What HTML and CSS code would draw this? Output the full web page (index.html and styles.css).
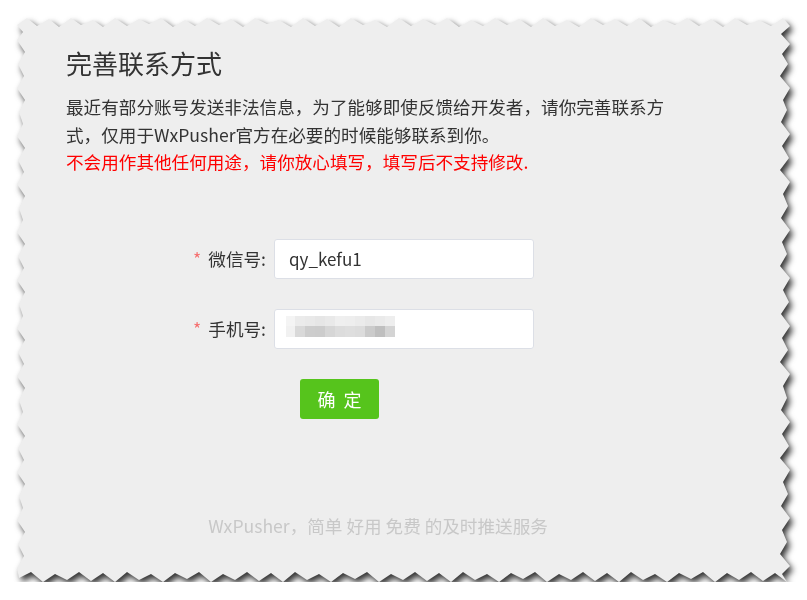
FILE: index.html
```html
<!DOCTYPE html>
<html lang="zh-CN">
<head>
<meta charset="utf-8">
<title>完善联系方式</title>
<link rel="stylesheet" href="styles.css">
</head>
<body>
<svg class="defs" width="0" height="0" aria-hidden="true">
  <clipPath id="tear" clipPathUnits="userSpaceOnUse">
    <polygon points="0,7 10,0 20,8 32,1 42,9 54,0 64,7 76,2 86,9 98,0 110,8 122,1 132,6 144,0 156,9 168,2 178,8 190,0 202,7 214,1 226,9 238,0 250,6 262,2 274,9 286,0 298,8 310,1 322,9 334,0 346,7 358,2 370,9 382,0 394,8 406,1 418,7 430,0 442,9 454,2 466,8 478,0 490,7 502,1 514,9 526,0 538,8 550,2 562,9 574,0 586,7 598,1 610,8 622,0 634,9 646,2 658,7 670,0 682,8 694,1 706,9 718,0 730,7 742,2 754,8 766,0
    773,8 764,16 773,26 765,36 771,46 763,58 773,70 766,82 770,92 764,104 773,116 765,128 772,140 763,152 773,164 766,176 771,188 764,200 773,212 765,224 770,236 763,248 773,260 766,272 772,284 764,296 773,308 765,320 771,332 763,344 773,356 766,368 770,380 764,392 773,404 765,416 772,428 763,440 773,452 766,464 771,476 764,488 773,500 765,512 770,524 763,536 773,548 765,556
    770,564 758,555 746,563 734,554 722,562 710,555 698,564 686,554 674,561 662,555 650,564 638,556 626,562 614,554 602,564 590,555 578,563 566,554 554,562 542,556 530,564 518,554 506,561 494,555 482,564 470,556 458,562 446,554 434,564 422,555 410,563 398,554 386,562 374,556 362,564 350,554 338,561 326,555 314,564 302,556 290,562 278,554 266,564 254,555 242,563 230,554 218,562 206,556 194,564 182,554 170,561 158,555 146,564 134,556 122,562 110,554 98,564 86,555 74,563 62,554 50,562 38,556 26,564 14,554 2,560
    0,550 7,538 1,526 8,514 0,502 6,490 2,478 8,466 0,454 7,442 1,430 8,418 0,406 6,394 2,382 8,370 0,358 7,346 1,334 8,322 0,310 6,298 2,286 8,274 0,262 7,250 1,238 8,226 0,214 6,202 2,190 8,178 0,166 7,154 1,142 8,130 0,118 6,106 2,94 8,82 0,70 7,58 1,46 8,34 0,22 6,14"/>
  </clipPath>
</svg>
<div class="sheet">
  <div class="paper">
    <div class="content">
      <h1 class="title">完善联系方式</h1>
      <p class="intro">最近有部分账号发送非法信息，为了能够即使反馈给开发者，请你完善联系方式，仅用于WxPusher官方在必要的时候能够联系到你。<br><span class="warn">不会用作其他任何用途，请你放心填写，填写后不支持修改.</span></p>
      <form class="form">
        <div class="row">
          <label class="label"><span class="req">*</span>微信号:</label>
          <div class="input">qy_kefu1</div>
        </div>
        <div class="row">
          <label class="label"><span class="req">*</span>手机号:</label>
          <div class="input"><div class="mosaic"></div></div>
        </div>
        <div class="actions">
          <button type="button" class="btn">确 定</button>
        </div>
      </form>
      <div class="footer">WxPusher，简单 好用 免费 的及时推送服务</div>
    </div>
  </div>
</div>
</body>
</html>
```
FILE: styles.css
```css
html, body {
  margin: 0;
  padding: 0;
  background: #ffffff;
}
body {
  font-family: "Noto Sans CJK SC", "Noto Sans", sans-serif;
  color: #333333;
}
.defs {
  display: block;
  width: 0;
  height: 0;
}
.sheet {
  padding: 18px 0 0 17px;
  filter: drop-shadow(3px 4px 3px rgba(0, 0, 0, 0.8));
}
.paper {
  width: 773px;
  height: 564px;
  background: #eeeeee;
  clip-path: url(#tear);
  box-sizing: border-box;
  padding: 27px 0 0 49px;
}
.content {
  width: 624px;
}
.title {
  margin: 0;
  font-size: 26px;
  line-height: 36px;
  font-weight: normal;
  color: #333333;
}
.intro {
  margin: 12px 0 0;
  width: 604px;
  font-size: 17.6px;
  line-height: 27.5px;
  color: #333333;
}
.warn {
  color: #ff0000;
}
.form {
  margin-top: 63px;
  display: flex;
  flex-direction: column;
  gap: 30px;
}
.row {
  display: flex;
  align-items: center;
  margin-left: 108px;
}
.label {
  width: 100px;
  box-sizing: border-box;
  padding-right: 8px;
  text-align: right;
  font-size: 17.6px;
  color: #333333;
}
.req {
  color: #f56c6c;
  margin-right: 7px;
}
.input {
  width: 260px;
  height: 40px;
  box-sizing: border-box;
  background: #ffffff;
  border: 1px solid #dcdfe6;
  border-radius: 3px;
  padding: 5px 14px;
  font-size: 17px;
  line-height: 28px;
  color: #333333;
  font-family: "Noto Sans CJK SC", "Open Sans", sans-serif;
}
.input .mosaic {
  margin: 1px 0 0 -3px;
  width: 109px;
  height: 21px;
  background:
    linear-gradient(to right, #f4f4f4 0 9px, #ebebeb 9px 19px, #e9e9e9 19px 29px, #e6e6e6 29px 39px, #e9e9e9 39px 49px, #efefef 49px 59px, #eeeeee 59px 69px, #ebebeb 69px 79px, #e7e7e7 79px 89px, #eaeaea 89px 99px, #eeeeee 99px 109px) top / 100% 10px no-repeat,
    linear-gradient(to right, #f1f1f1 0 9px, #d9d9d9 9px 19px, #cdcdcd 19px 29px, #cccccc 29px 39px, #d6d6d6 39px 49px, #dcdcdc 49px 59px, #dedede 59px 69px, #dcdcdc 69px 79px, #cbcbcb 79px 89px, #bfbfbf 89px 99px, #d4d4d4 99px 109px) bottom / 100% 11px no-repeat;
}
.actions {
  margin-left: 234px;
}
.btn {
  width: 79px;
  height: 40px;
  border: none;
  border-radius: 3px;
  background: #56c41c;
  color: #ffffff;
  font-family: "Noto Sans CJK SC", sans-serif;
  font-size: 18px;
  letter-spacing: 2px;
  padding: 0 0 0 2px;
}
.footer {
  margin-top: 95px;
  text-align: center;
  font-size: 17.6px;
  line-height: 24px;
  color: #c8c8c8;
}
```
